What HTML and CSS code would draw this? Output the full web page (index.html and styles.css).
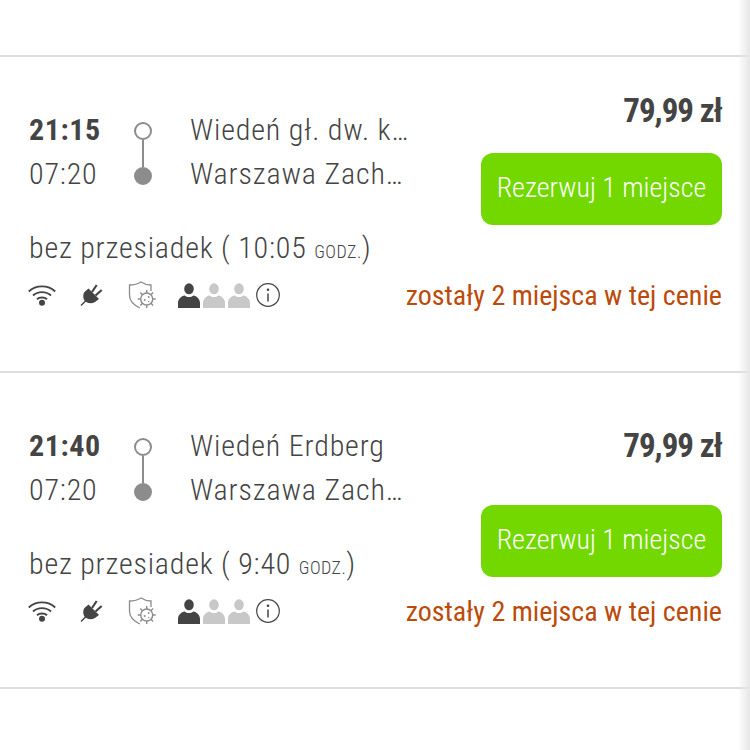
FILE: index.html
```html
<!DOCTYPE html>
<html lang="pl">
<head>
<meta charset="utf-8">
<title>Połączenia</title>
<link rel="stylesheet" href="styles.css">
</head>
<body>
<svg class="defs" width="0" height="0" aria-hidden="true">
  <defs>
    <symbol id="wifi" viewBox="0 0 28 22">
      <path d="M.8 7.500C7.800 .6 20.200 .6 27.200 7.500M5 11.500C10 7 18 7 23 11.500M9 15.200C11.500 13 16.500 13 19 15.200" fill="none" stroke="#444" stroke-width="1.900"/>
      <circle cx="14" cy="18.700" r="3" fill="#444"/>
    </symbol>
    <symbol id="plug" viewBox="0 0 24 24">
      <path d="M1 22.500l5-5" stroke="#444" stroke-width="1.500" fill="none"/>
      <path d="M8.500 5.500L19 16l-4 3c-4 2.500-8.500 1-10.500-1.500C2.500 14.500 3 10.500 5 8.500z" fill="#444"/>
      <path d="M12 9l4.700-7M15.500 12.500L21.700 7" stroke="#444" stroke-width="2.200" fill="none"/>
    </symbol>
    <symbol id="shield" viewBox="0 0 30 30">
      <path d="M23 11V5c-4 0-7-1-10-3C10 4 6 5 1.500 5v10c0 6 4 10 10.500 13" fill="none" stroke="#8c8c8c" stroke-width="1.300"/>
      <circle cx="18.700" cy="19" r="6" fill="#fff" stroke="#8c8c8c" stroke-width="1.400"/>
      <path d="M18.700 10v3M18.700 25v3M9.700 19h3M24.700 19h3M12.300 12.600l2.200 2.200M22.900 23.200l2.200 2.200M12.300 25.400l2.200-2.200M22.900 14.800l2.200-2.200" stroke="#8c8c8c" stroke-width="1.400" fill="none"/>
      <circle cx="16.700" cy="20" r="1" fill="#8c8c8c"/>
      <circle cx="20.700" cy="17" r=".9" fill="#8c8c8c"/>
      <circle cx="20.700" cy="21.500" r=".7" fill="#8c8c8c"/>
    </symbol>
    <symbol id="person" viewBox="0 0 22 25">
      <ellipse cx="11" cy="5.800" rx="4.800" ry="5.500"/>
      <path d="M0 25v-5c0-4 3.300-7 6.800-7.500 1.200 1 2.600 1.500 4.200 1.500s3-.5 4.200-1.500c3.500.5 6.800 3.500 6.800 7.500v5z"/>
    </symbol>
    <symbol id="info" viewBox="0 0 24 24">
      <circle cx="12" cy="12" r="11.300" fill="none" stroke="#444" stroke-width="1.200"/>
      <circle cx="12" cy="6.800" r="1.300" fill="#444"/>
      <path d="M12 10.500v8" stroke="#444" stroke-width="1.500" fill="none"/>
    </symbol>
  </defs>
</svg>
<main class="list">
  <article class="trip">
    <div class="left">
      <div class="route">
        <div class="times"><b>21:15</b><span>07:20</span></div>
        <div class="track"><i class="stop"></i><i class="line"></i><i class="stop end"></i></div>
        <div class="places"><span>Wiedeń gł. dw. kolejowy</span><span>Warszawa Zachodnia</span></div>
      </div>
      <p class="duration">bez przesiadek ( 10:05 <small>GODZ.</small>)</p>
      <div class="icons">
        <svg class="i-wifi"><use href="#wifi"/></svg>
        <svg class="i-plug"><use href="#plug"/></svg>
        <svg class="i-shield"><use href="#shield"/></svg>
        <div class="seats">
          <svg class="seat on"><use href="#person"/></svg>
          <svg class="seat"><use href="#person"/></svg>
          <svg class="seat"><use href="#person"/></svg>
          <svg class="i-info"><use href="#info"/></svg>
        </div>
      </div>
    </div>
    <div class="right">
      <strong class="price">79,99 zł</strong>
      <button class="book">Rezerwuj 1 miejsce</button>
      <p class="left-seats">zostały 2 miejsca w tej cenie</p>
    </div>
  </article>
  <article class="trip second">
    <div class="left">
      <div class="route">
        <div class="times"><b>21:40</b><span>07:20</span></div>
        <div class="track"><i class="stop"></i><i class="line"></i><i class="stop end"></i></div>
        <div class="places"><span>Wiedeń Erdberg</span><span>Warszawa Zachodnia</span></div>
      </div>
      <p class="duration">bez przesiadek ( 9:40 <small>GODZ.</small>)</p>
      <div class="icons">
        <svg class="i-wifi"><use href="#wifi"/></svg>
        <svg class="i-plug"><use href="#plug"/></svg>
        <svg class="i-shield"><use href="#shield"/></svg>
        <div class="seats">
          <svg class="seat on"><use href="#person"/></svg>
          <svg class="seat"><use href="#person"/></svg>
          <svg class="seat"><use href="#person"/></svg>
          <svg class="i-info"><use href="#info"/></svg>
        </div>
      </div>
    </div>
    <div class="right">
      <strong class="price">79,99 zł</strong>
      <button class="book">Rezerwuj 1 miejsce</button>
      <p class="left-seats">zostały 2 miejsca w tej cenie</p>
    </div>
  </article>
</main>
<div class="edge"></div>
</body>
</html>
```
FILE: styles.css
```css
* { box-sizing: border-box; }
html, body { margin: 0; height: 750px; overflow: hidden; background: #fff; }
body { font-family: Roboto, "Noto Sans", sans-serif; color: #444; font-weight: 300; position: relative; }
.defs { position: absolute; }
.list { padding-top: 55px; }
.trip { height: 316px; border-top: 2px solid #dedede; padding: 0 28px 0 29px; display: flex; justify-content: space-between; }
.trip:last-child { height: 318px; border-bottom: 2px solid #dedede; }
.left { flex: none; width: 370px; padding-top: 51px; }
.route { display: flex; height: 88px; }
.times { flex: none; width: 100px; display: flex; flex-direction: column; font-size: 30px; line-height: 44px; font-stretch: 75%; letter-spacing: .8px; }
.times b { font-weight: 700; letter-spacing: .6px; }
.track { flex: none; width: 28px; padding-top: 14px; display: flex; flex-direction: column; align-items: center; margin-right: 33px; }
.stop { width: 18px; height: 18px; border-radius: 50%; border: 2px solid #8c8c8c; flex: none; background: #fff; }
.stop.end { background: #8c8c8c; }
.line { width: 2px; height: 27px; background: #8c8c8c; flex: none; }
.places { flex: none; width: 223px; display: flex; flex-direction: column; font-size: 30px; line-height: 44px; font-stretch: 85%; letter-spacing: .85px; }
.places span { white-space: nowrap; overflow: hidden; text-overflow: ellipsis; }
.duration { margin: 30px 0 0; font-size: 30px; line-height: 44px; font-stretch: 85%; letter-spacing: .8px; white-space: nowrap; }
.duration small { font-size: 18px; font-weight: 300; letter-spacing: .5px; }
.icons { display: flex; align-items: center; margin: 4px 0 0 -1px; height: 34px; }
.icons svg { display: block; flex: none; }
.i-wifi { width: 28px; height: 22px; margin-right: 24px; }
.i-plug { width: 24px; height: 24px; margin-right: 24px; }
.i-shield { width: 30px; height: 30px; margin-right: 20px; }
.seats { display: flex; align-items: center; gap: 3px; }
.seat { width: 22px; height: 25px; fill: #c8c8c8; }
.seat.on { fill: #444; }
.i-info { width: 24px; height: 24px; margin-left: 3px; }
.right { flex: none; display: flex; flex-direction: column; align-items: flex-end; padding: 32px 0 55px; }
.second .right { padding-top: 51px; }
.price { font-size: 33px; line-height: 44px; font-weight: 700; font-stretch: 75%; letter-spacing: -1px; }
.book { width: 241px; height: 72px; margin-top: 20px; padding: 0 0 3px; border: 0; border-radius: 12px; background: #72d800; color: #fff; font: inherit; font-size: 28px; font-weight: 300; font-stretch: 85%; }
.second .book { margin-top: 37px; }
.left-seats { margin: auto 0 0; font-size: 28px; line-height: 40px; font-weight: 400; font-stretch: 85%; color: #bc4a0a; white-space: nowrap; }
.edge { position: absolute; top: 0; right: 0; width: 12px; height: 750px; background: linear-gradient(to right, rgba(226,226,226,0), #e6e6e6); }
```
